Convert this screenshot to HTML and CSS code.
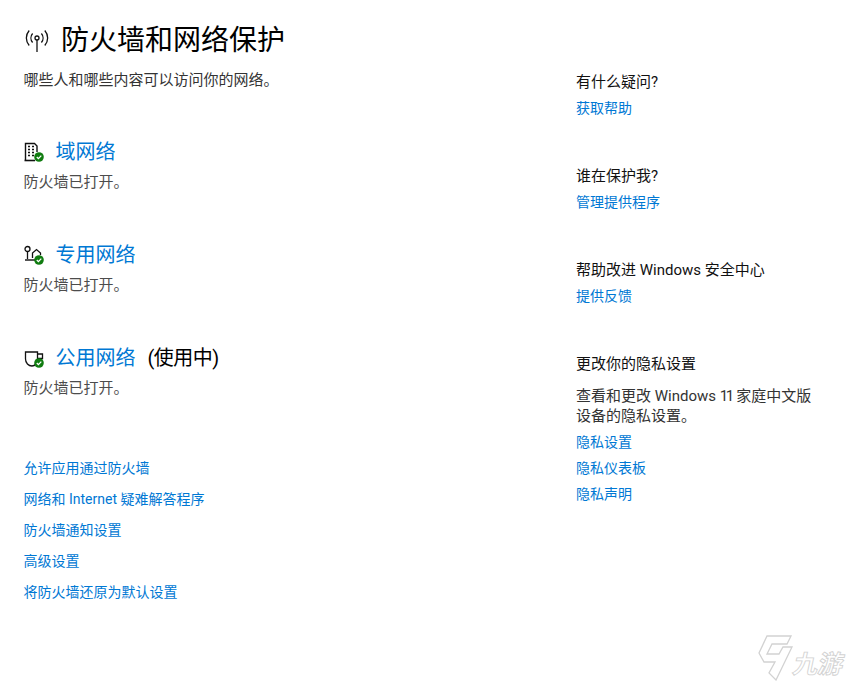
FILE: index.html
```html
<!DOCTYPE html>
<html lang="zh-CN">
<head>
<meta charset="utf-8">
<title>防火墙和网络保护</title>
<link rel="stylesheet" href="styles.css">
</head>
<body>
<main class="page">
  <section class="left">
    <header class="title-row">
      <svg class="title-icon" width="26" height="26" viewBox="0 0 26 26" fill="none" stroke="#111" stroke-width="1.3">
        <circle cx="13" cy="10" r="2"/>
        <path d="M13 12v12"/>
        <path d="M8.600 5.500c-2.200 2.600-2.200 6.400 0 9M17.400 5.500c2.200 2.600 2.200 6.400 0 9"/>
        <path d="M5.200 2.500c-3.800 4.400-3.800 10.600 0 15M20.800 2.500c3.800 4.400 3.800 10.600 0 15"/>
      </svg>
      <h1 class="title">防火墙和网络保护</h1>
    </header>
    <p class="subtitle">哪些人和哪些内容可以访问你的网络。</p>

    <div class="networks">
      <article class="network">
        <div class="network-head">
          <svg class="net-icon" width="20" height="20" viewBox="0 0 20 20" fill="none" stroke="#111">
            <path d="M1.500 18V1.500H10.500L13 4V10" stroke-width="1.400"/>
            <path d="M0.500 18.500H11" stroke-width="1.600"/>
            <path d="M4 4.500h2M8 4.500h2M4 7.500h2M8 7.500h2M4 10.500h2M8 10.500h2M4 13.500h2M8 13.500h2" stroke-width="1.700"/>
            <circle cx="15" cy="15" r="4.800" fill="#107c10" stroke="none"/>
            <path d="M12.800 15l1.600 1.600 2.900-3" stroke="#fff" stroke-width="1.300"/>
          </svg>
          <a class="net-link" href="#">域网络</a>
        </div>
        <p class="status">防火墙已打开。</p>
      </article>
      <article class="network">
        <div class="network-head">
          <svg class="net-icon" width="20" height="20" viewBox="0 0 20 20" fill="none" stroke="#111" stroke-width="1.300">
            <circle cx="3.500" cy="4" r="2.500"/>
            <path d="M3.500 6.500v7.500"/>
            <path d="M8.500 13V8L12.500 4.500L16.500 8V10"/>
            <path d="M1 15H12" stroke-width="2" stroke="#555"/>
            <circle cx="15" cy="15" r="4.800" fill="#107c10" stroke="none"/>
            <path d="M12.800 15l1.600 1.600 2.900-3" stroke="#fff" stroke-width="1.300"/>
          </svg>
          <a class="net-link" href="#">专用网络</a>
        </div>
        <p class="status">防火墙已打开。</p>
      </article>
      <article class="network">
        <div class="network-head">
          <svg class="net-icon" width="20" height="20" viewBox="0 0 20 20" fill="none" stroke="#111" stroke-width="1.300">
            <path d="M1.500 4H13.500V11C13.500 15 11 18 8 18C4.500 18 1.500 15 1.500 11Z"/>
            <path d="M13.500 6H18.500V10.500H13.500"/>
            <circle cx="15" cy="15" r="4.800" fill="#107c10" stroke="none"/>
            <path d="M12.800 15l1.600 1.600 2.900-3" stroke="#fff" stroke-width="1.300"/>
          </svg>
          <a class="net-link" href="#">公用网络</a>
          <span class="in-use">(使用中)</span>
        </div>
        <p class="status">防火墙已打开。</p>
      </article>
    </div>

    <nav class="actions">
      <a href="#">允许应用通过防火墙</a>
      <a href="#">网络和 Internet 疑难解答程序</a>
      <a href="#">防火墙通知设置</a>
      <a href="#">高级设置</a>
      <a href="#">将防火墙还原为默认设置</a>
    </nav>
  </section>

  <aside class="right">
    <section class="side-block">
      <h2 class="side-title">有什么疑问?</h2>
      <a class="side-link" href="#">获取帮助</a>
    </section>
    <section class="side-block">
      <h2 class="side-title">谁在保护我?</h2>
      <a class="side-link" href="#">管理提供程序</a>
    </section>
    <section class="side-block">
      <h2 class="side-title">帮助改进 Windows 安全中心</h2>
      <a class="side-link" href="#">提供反馈</a>
    </section>
    <section class="side-block privacy">
      <h2 class="side-title">更改你的隐私设置</h2>
      <p class="side-text">查看和更改 Windows <span class="digits">11</span> 家庭中文版<br>设备的隐私设置。</p>
      <a class="side-link" href="#">隐私设置</a>
      <a class="side-link" href="#">隐私仪表板</a>
      <a class="side-link" href="#">隐私声明</a>
    </section>
  </aside>
</main>

<div class="watermark">
  <svg class="wm-logo" width="42" height="52" viewBox="0 0 42 52" fill="none" stroke="#d2d2d2" stroke-width="1.300">
    <path d="M15 6H39L35 14H20L15 24H27L31 17H40L24 50L17 43L23 32H12L7 23Z"/>
  </svg>
  <span class="wm-text">九游</span>
</div>
</body>
</html>
```

FILE: styles.css
```css
* { box-sizing: border-box; }
html, body { margin: 0; padding: 0; background: #fff; }
body {
  width: 848px;
  height: 681px;
  overflow: hidden;
  position: relative;
  font-family: Roboto, "Noto Sans CJK SC", sans-serif;
  color: #000;
}
a { color: #0078d4; text-decoration: none; }
h1, h2, p { margin: 0; font-weight: 400; }

.page { display: flex; padding: 17px 0 0 24px; }
.left { width: 552px; display: flex; flex-direction: column; }
.right { display: flex; flex-direction: column; padding-top: 54px; }

.title-row { display: flex; align-items: center; height: 48px; gap: 11px; }
.title-icon { flex: none; }
.title { font-size: 28px; line-height: 48px; color: #000; }
.subtitle { font-size: 15px; line-height: 22px; margin: 4px 0 0 -0.5px; color: #333; }

.networks { display: flex; flex-direction: column; gap: 48px; margin-top: 47px; }
.network-head { display: flex; align-items: center; height: 28px; }
.net-icon { flex: none; margin-right: 12px; }
.net-link { font-size: 20px; line-height: 28px; margin-left: -0.5px; }
.in-use { font-size: 20px; line-height: 28px; margin-left: 12px; letter-spacing: -0.5px; }
.status { font-size: 15px; line-height: 22px; margin: 5px 0 0 -0.5px; color: #4c4c4c; }

.actions { display: flex; flex-direction: column; align-items: flex-start; gap: 11px; margin-top: 59px; }
.actions a { font-size: 14px; line-height: 20px; margin-left: -0.5px; }

.side-block { display: flex; flex-direction: column; align-items: flex-start; margin-bottom: 47px; }
.side-title { font-size: 15px; line-height: 22px; color: #111; }
.side-link { font-size: 14px; line-height: 20px; margin-top: 5px; }
.side-text { font-size: 15px; line-height: 20px; margin: 11px 0 0; color: #333; }
.privacy .side-link { margin-top: 6px; }
.digits { letter-spacing: -2.5px; margin-right: 1px; }

.watermark { position: absolute; left: 752px; top: 630px; display: flex; align-items: flex-start; }
.wm-logo { flex: none; }
.wm-text {
  font-size: 25px;
  line-height: 28px;
  font-family: "Noto Sans CJK SC", sans-serif;
  font-weight: 700;
  color: #fff;
  -webkit-text-stroke: 0.9px #d2d2d2;
  transform: skewX(-12deg);
  margin: 18px 0 0 0;
}
```
